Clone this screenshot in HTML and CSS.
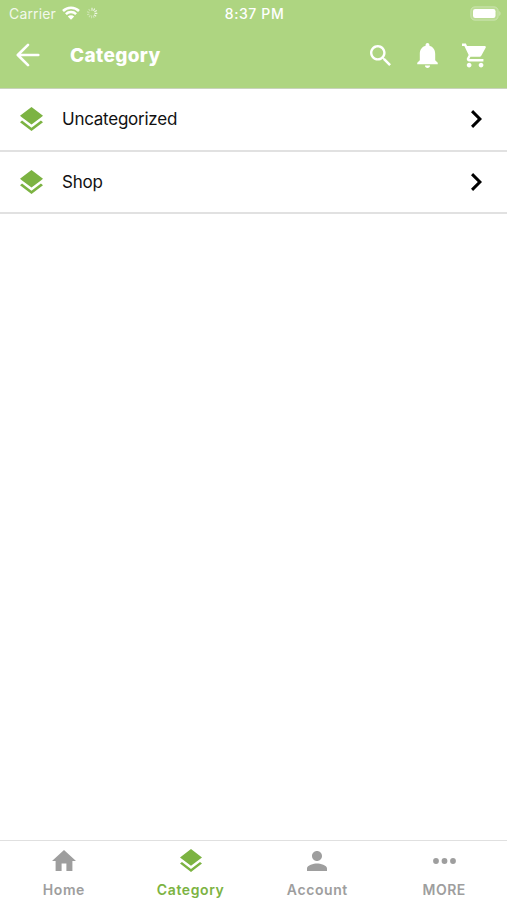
FILE: index.html
```html
<!DOCTYPE html>
<html lang="en">
  <head>
    <meta charset="utf-8" />
    <title>Category</title>
    <meta name="viewport" content="width=device-width, initial-scale=1.0" />
    <link rel="stylesheet" href="styles.css">
  </head>
  <body>
    <svg class="symbols" width="0" height="0">
      <symbol id="layers" viewBox="3 2 18 19.1" preserveAspectRatio="none">
        <path d="M11.99 18.54l-7.37-5.73L3 14.07l9 7 9-7-1.63-1.27-7.38 5.74zM12 16l7.36-5.73L21 9l-9-7-9 7 1.63 1.27L12 16z" />
      </symbol>
      <symbol id="chevron" viewBox="8.59 6 7.41 12">
        <path d="M10 6L8.59 7.41 13.17 12l-4.58 4.59L10 18l6-6z" />
      </symbol>
    </svg>

    <header>
      <div class="status-bar">
        <div class="status-left">
          <span class="carrier">Carrier</span>
          <svg class="wifi" viewBox="0 0 18 14">
            <path d="M1 5a11.3 11.3 0 0 1 16 0M3.9 8.2a7.2 7.2 0 0 1 10.2 0" />
            <path class="dot" d="M5.8 10.5a4.5 4.5 0 0 1 6.4 0L9 13.8z" />
          </svg>
          <svg class="spinner" viewBox="0 0 12 12">
            <path d="M6 .7v3M8.7 1.5L7.5 3.8M10.8 3.6L8.4 4.8M11.3 6.4H8.6M10.2 9.2L8.1 7.8" />
            <path class="faded" d="M8.2 11L7.2 8.5M5.6 11.3V8.6M2.9 10.2l1.4-2M1.1 7.8l2.3-.9M.9 4.8l2.5.7M2.6 2l1.6 2" />
          </svg>
        </div>
        <span class="time">8:37 PM</span>
        <div class="status-right">
          <svg class="battery" viewBox="0 0 31 15">
            <rect class="shell" x=".8" y=".8" width="27.4" height="13.4" rx="4.2" />
            <rect x="3" y="3" width="22.5" height="9" rx="2.2" />
            <path class="cap" d="M29.3 5v5c1.6-.8 1.6-4.2 0-5z" />
          </svg>
        </div>
      </div>

      <div class="nav-bar">
        <svg class="back" viewBox="0 0 24 24">
          <path d="M22.3 12H2M12 1.8L1.8 12 12 22.2" />
        </svg>
        <h1>Category</h1>
        <div class="actions">
          <svg class="search" viewBox="3 3 17.5 17.5">
            <path d="M15.5 14h-.79l-.28-.27C15.41 12.59 16 11.11 16 9.5 16 5.91 13.09 3 9.5 3S3 5.91 3 9.5 5.91 16 9.5 16c1.61 0 3.09-.59 4.23-1.57l.27.28v.79l5 4.99L20.49 19l-4.99-5zm-6 0C7.01 14 5 11.99 5 9.5S7.01 5 9.5 5 14 7.01 14 9.5 11.99 14 9.5 14z" />
          </svg>
          <svg class="bell" viewBox="4 2.5 16 19.5">
            <path d="M12 22c1.1 0 2-.9 2-2h-4c0 1.1.89 2 2 2zm6-6v-5c0-3.07-1.64-5.64-4.5-6.32V4c0-.83-.67-1.5-1.5-1.5s-1.5.67-1.5 1.5v.68C7.63 5.36 6 7.92 6 11v5l-2 2v1h16v-1l-2-2z" />
          </svg>
          <svg class="cart" viewBox="1 2 21 20">
            <path d="M7 18c-1.1 0-1.99.9-1.99 2S5.9 22 7 22s2-.9 2-2-.9-2-2-2zM1 2v2h2l3.6 7.59-1.35 2.45c-.16.28-.25.61-.25.96 0 1.1.9 2 2 2h12v-2H7.42c-.14 0-.25-.11-.25-.25l.03-.12.9-1.63h7.45c.75 0 1.41-.41 1.75-1.03l3.58-6.49c.08-.14.12-.31.12-.48 0-.55-.45-1-1-1H5.21l-.94-2H1zm16 16c-1.1 0-1.99.9-1.99 2s.89 2 1.99 2 2-.9 2-2-.9-2-2-2z" />
          </svg>
        </div>
      </div>
    </header>

    <main>
      <div class="category-item">
        <svg class="layers"><use href="#layers" /></svg>
        <span>Uncategorized</span>
        <svg class="chevron"><use href="#chevron" /></svg>
      </div>
      <div class="category-item">
        <svg class="layers"><use href="#layers" /></svg>
        <span>Shop</span>
        <svg class="chevron"><use href="#chevron" /></svg>
      </div>
    </main>

    <nav class="tab-bar">
      <div class="tab">
        <div class="tab-icon">
          <svg class="home" viewBox="2 3 20 17" preserveAspectRatio="none">
            <path d="M10 20v-6h4v6h5v-8h3L12 3 2 12h3v8z" />
          </svg>
        </div>
        <span>Home</span>
      </div>
      <div class="tab active">
        <div class="tab-icon">
          <svg class="tab-layers"><use href="#layers" /></svg>
        </div>
        <span>Category</span>
      </div>
      <div class="tab">
        <div class="tab-icon">
          <svg class="person" viewBox="4 4 16 16">
            <path d="M12 12c2.21 0 4-1.79 4-4s-1.79-4-4-4-4 1.79-4 4 1.79 4 4 4zm0 2c-2.67 0-8 1.34-8 4v2h16v-2c0-2.66-5.33-4-8-4z" />
          </svg>
        </div>
        <span>Account</span>
      </div>
      <div class="tab">
        <div class="tab-icon">
          <svg class="more" viewBox="0 0 23 6">
            <circle cx="3" cy="3" r="2.9" />
            <circle cx="11.5" cy="3" r="2.9" />
            <circle cx="20" cy="3" r="2.9" />
          </svg>
        </div>
        <span class="more-label">MORE</span>
      </div>
    </nav>
  </body>
</html>
```
FILE: styles.css
```css
* {
  box-sizing: border-box;
}

body {
  margin: 0;
  height: 100vh;
  display: flex;
  flex-direction: column;
  overflow: hidden;
  background: #fff;
  color: #111;
  font-family: Inter, Roboto, sans-serif;
}

svg {
  display: block;
  flex-shrink: 0;
  fill: currentColor;
}

.symbols {
  position: absolute;
}

header {
  height: 89px;
  background: #aed581;
  border-bottom: 1px solid #c9d3bd;
  color: #fff;
}

.status-bar {
  display: grid;
  grid-template-columns: 1fr auto 1fr;
  align-items: center;
  height: 27px;
  padding: 0 7px 0 9px;
  font-size: 14px;
}

.status-left {
  display: flex;
  align-items: center;
}

.carrier {
  width: 47px;
  opacity: 0.85;
  letter-spacing: 0.15px;
  white-space: nowrap;
}

.wifi {
  width: 18px;
  height: 14px;
  margin: 0 0 2px 6px;
}

.wifi path {
  fill: none;
  stroke: #fff;
  stroke-width: 2.5;
}

.wifi .dot {
  fill: #fff;
  stroke: none;
}

.spinner {
  width: 12px;
  height: 12px;
  margin: 0 0 2px 6px;
  fill: none;
  stroke: #fff;
  stroke-width: 1.1;
  opacity: 0.8;
}

.spinner .faded {
  opacity: 0.5;
}

.time {
  font-size: 14px;
  font-weight: 500;
  letter-spacing: 0.6px;
}

.status-right {
  display: flex;
  justify-content: flex-end;
}

.battery {
  width: 31px;
  height: 15px;
  margin-right: -1px;
}

.battery .shell {
  fill: #fff;
  fill-opacity: 0.15;
  stroke: #fff;
  stroke-opacity: 0.3;
}

.battery .cap {
  opacity: 0.4;
}

.nav-bar {
  display: flex;
  align-items: center;
  height: 57px;
  padding: 0 20px 0 16px;
}

.back {
  width: 24px;
  height: 24px;
  margin-bottom: 1px;
  fill: none;
  stroke: #fff;
  stroke-width: 2.6;
  stroke-linecap: round;
  stroke-linejoin: round;
}

h1 {
  margin: 0 0 0 30px;
  font-size: 19px;
  font-weight: 800;
  line-height: 24px;
  letter-spacing: 0.35px;
}

.actions {
  display: flex;
  align-items: center;
  margin-left: auto;
}

.search {
  width: 21px;
  height: 21px;
  margin-bottom: 1px;
}

.bell {
  width: 21px;
  height: 25px;
  margin-left: 26px;
}

.cart {
  width: 25px;
  height: 25px;
  margin-left: 24px;
}

main {
  flex: 1;
}

.category-item {
  display: flex;
  align-items: center;
  height: 62.5px;
  padding: 0 25px 0 20px;
  border-bottom: 2px solid #e1e1e1;
  font-size: 17px;
  letter-spacing: -0.25px;
}

.layers {
  width: 23px;
  height: 24px;
  color: #7cb342;
}

.category-item span {
  margin-left: 19px;
}

.chevron {
  width: 11px;
  height: 18px;
  margin-left: auto;
  color: #000;
}

.tab-bar {
  display: grid;
  grid-template-columns: repeat(4, 1fr);
  height: 60px;
  border-top: 1px solid #e0e0e0;
  color: #9e9e9e;
}

.tab {
  display: flex;
  flex-direction: column;
  align-items: center;
  padding: 4px 0 0 1px;
  font-size: 14px;
  font-weight: 600;
  line-height: 18px;
  letter-spacing: 0.6px;
}

.tab.active {
  color: #7cb342;
}

.tab-icon {
  display: flex;
  align-items: center;
  justify-content: center;
  height: 30px;
  margin-bottom: 6px;
}

.home {
  width: 24px;
  height: 21px;
}

.tab-layers {
  width: 22px;
  height: 23px;
}

.person {
  width: 20px;
  height: 20px;
  margin-top: 2px;
}

.more {
  width: 23px;
  height: 6px;
  margin-top: 1px;
}

.more-label {
  letter-spacing: 0.5px;
}
```
